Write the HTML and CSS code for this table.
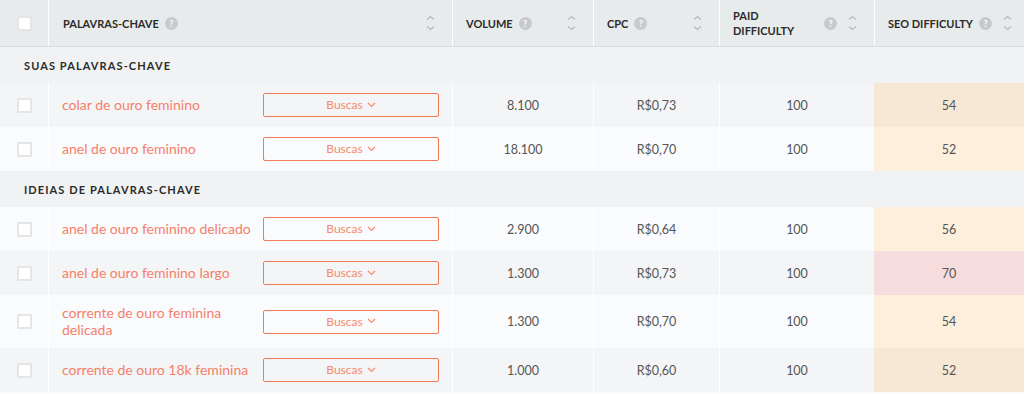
FILE: index.html
```html
<!DOCTYPE html>
<html lang="pt-BR">
<head>
<meta charset="utf-8">
<title>Palavras-chave</title>
<link rel="stylesheet" href="styles.css">
</head>
<body>
<div class="table">
  <div class="row head">
    <div class="cell check"><span class="box"></span></div>
    <div class="cell th"><span class="label">Palavras-chave</span><span class="help">?</span><svg class="sort" viewBox="0 0 9 16"><path d="M1 4.5 L4.5 1.5 L8 4.5 M1 11.5 L4.5 14.5 L8 11.5"/></svg></div>
    <div class="cell th"><span class="label">Volume</span><span class="help">?</span><svg class="sort" viewBox="0 0 9 16"><path d="M1 4.5 L4.5 1.5 L8 4.5 M1 11.5 L4.5 14.5 L8 11.5"/></svg></div>
    <div class="cell th"><span class="label">CPC</span><span class="help">?</span><svg class="sort" viewBox="0 0 9 16"><path d="M1 4.5 L4.5 1.5 L8 4.5 M1 11.5 L4.5 14.5 L8 11.5"/></svg></div>
    <div class="cell th"><span class="label">Paid<br>Difficulty</span><span class="help help-right">?</span><svg class="sort sort-near" viewBox="0 0 9 16"><path d="M1 4.5 L4.5 1.5 L8 4.5 M1 11.5 L4.5 14.5 L8 11.5"/></svg></div>
    <div class="cell th th-last"><span class="label">SEO Difficulty</span><span class="help">?</span><svg class="sort" viewBox="0 0 9 16"><path d="M1 4.5 L4.5 1.5 L8 4.5 M1 11.5 L4.5 14.5 L8 11.5"/></svg></div>
  </div>

  <div class="row section"><div class="cell section-title">Suas palavras-chave</div></div>

  <div class="row data alt">
    <div class="cell check"><span class="box"></span></div>
    <div class="cell kw"><span class="kw-text">colar de ouro feminino</span><button class="btn">Buscas<svg class="chev" viewBox="0 0 9 6"><path d="M1 1 L4.5 4.5 L8 1"/></svg></button></div>
    <div class="cell num">8.100</div>
    <div class="cell num">R$0,73</div>
    <div class="cell num">100</div>
    <div class="cell num seo seo-mid-alt">54</div>
  </div>
  <div class="row data">
    <div class="cell check"><span class="box"></span></div>
    <div class="cell kw"><span class="kw-text">anel de ouro feminino</span><button class="btn">Buscas<svg class="chev" viewBox="0 0 9 6"><path d="M1 1 L4.5 4.5 L8 1"/></svg></button></div>
    <div class="cell num">18.100</div>
    <div class="cell num">R$0,70</div>
    <div class="cell num">100</div>
    <div class="cell num seo seo-mid">52</div>
  </div>

  <div class="row section"><div class="cell section-title">Ideias de palavras-chave</div></div>

  <div class="row data">
    <div class="cell check"><span class="box"></span></div>
    <div class="cell kw"><span class="kw-text">anel de ouro feminino delicado</span><button class="btn">Buscas<svg class="chev" viewBox="0 0 9 6"><path d="M1 1 L4.5 4.5 L8 1"/></svg></button></div>
    <div class="cell num">2.900</div>
    <div class="cell num">R$0,64</div>
    <div class="cell num">100</div>
    <div class="cell num seo seo-mid">56</div>
  </div>
  <div class="row data alt">
    <div class="cell check"><span class="box"></span></div>
    <div class="cell kw"><span class="kw-text">anel de ouro feminino largo</span><button class="btn">Buscas<svg class="chev" viewBox="0 0 9 6"><path d="M1 1 L4.5 4.5 L8 1"/></svg></button></div>
    <div class="cell num">1.300</div>
    <div class="cell num">R$0,73</div>
    <div class="cell num">100</div>
    <div class="cell num seo seo-high">70</div>
  </div>
  <div class="row data">
    <div class="cell check"><span class="box"></span></div>
    <div class="cell kw"><span class="kw-text">corrente de ouro feminina delicada</span><button class="btn">Buscas<svg class="chev" viewBox="0 0 9 6"><path d="M1 1 L4.5 4.5 L8 1"/></svg></button></div>
    <div class="cell num">1.300</div>
    <div class="cell num">R$0,70</div>
    <div class="cell num">100</div>
    <div class="cell num seo seo-mid">54</div>
  </div>
  <div class="row data alt">
    <div class="cell check"><span class="box"></span></div>
    <div class="cell kw"><span class="kw-text">corrente de ouro 18k feminina</span><button class="btn">Buscas<svg class="chev" viewBox="0 0 9 6"><path d="M1 1 L4.5 4.5 L8 1"/></svg></button></div>
    <div class="cell num">1.000</div>
    <div class="cell num">R$0,60</div>
    <div class="cell num">100</div>
    <div class="cell num seo seo-mid-alt">52</div>
  </div>
</div>
</body>
</html>
```

FILE: styles.css
```css
* { box-sizing: border-box; }
html, body { margin: 0; padding: 0; }
body {
  background: #f9fafb;
  font-family: Lato, "Liberation Sans", sans-serif;
  font-size: 13px;
  color: #555;
}
.table { width: 1024px; }
.row {
  display: grid;
  grid-template-columns: 48px 404px 141px 126px 155px 150px;
}
.cell { display: flex; align-items: center; }
.cell + .cell { border-left: 1px solid #fff; }

.head {
  height: 47px;
  background: #e8ebec;
  border-bottom: 1px solid #d9dcde;
}
.check { justify-content: center; padding-left: 1px; }
.box {
  width: 15px; height: 15px;
  background: #fff;
  border: 2px solid #e3e5e6;
  border-radius: 1px;
}
.th {
  padding: 0 17px 0 13px;
  font-weight: 700;
  font-size: 11px;
  line-height: 15px;
  color: #2b2b2b;
  text-transform: uppercase;
}
.th:nth-child(2) { padding-left: 14px; }
.th-last { padding-right: 12px; }
.help {
  width: 13px; height: 13px;
  border-radius: 50%;
  background: #c7cacc;
  color: #fff;
  font-size: 9px;
  font-weight: 700;
  line-height: 13px;
  text-align: center;
  margin-left: 6px;
  flex: none;
}
.help-right { margin-left: auto; }
.sort {
  width: 9px; height: 16px;
  margin-left: auto;
  flex: none;
  fill: none;
  stroke: #b6babd;
  stroke-width: 1.2;
}
.sort-near { margin-left: 11px; }

.section {
  height: 36px;
  background: #f1f2f3;
}
.section .cell { grid-column: 1 / -1; }
.section-title {
  padding-left: 24px;
  font-weight: 700;
  font-size: 11px;
  letter-spacing: 1.1px;
  color: #2b2b2b;
  text-transform: uppercase;
}

.data { min-height: 44px; background: #fafbfc; }
.data.alt { background: #f4f5f6; }
.kw {
  padding: 10px 13px 10px 13px;
  gap: 8px;
}
.kw-text {
  flex: 1;
  color: #f5806a;
  font-size: 14px;
  line-height: 16.5px;
  padding-right: 4px;
}
.btn {
  width: 176px; height: 24px;
  flex: none;
  background: transparent;
  border: 1px solid #f47b53;
  border-radius: 2px;
  color: #f58b6d;
  font-family: inherit;
  font-size: 12px;
  display: flex;
  align-items: center;
  justify-content: center;
  gap: 4px;
  padding: 0 0 1px;
}
.chev {
  width: 9px; height: 6px;
  fill: none;
  stroke: #f58b6d;
  stroke-width: 1.2;
}
.num {
  justify-content: center;
  font-size: 12.5px;
  color: #555;
}
.seo-mid { background: #fcefdc; }
.seo-mid-alt { background: #f6e8d5; }
.seo-high { background: #f6dcdd; }
.data .seo { border-left: none; }
```
